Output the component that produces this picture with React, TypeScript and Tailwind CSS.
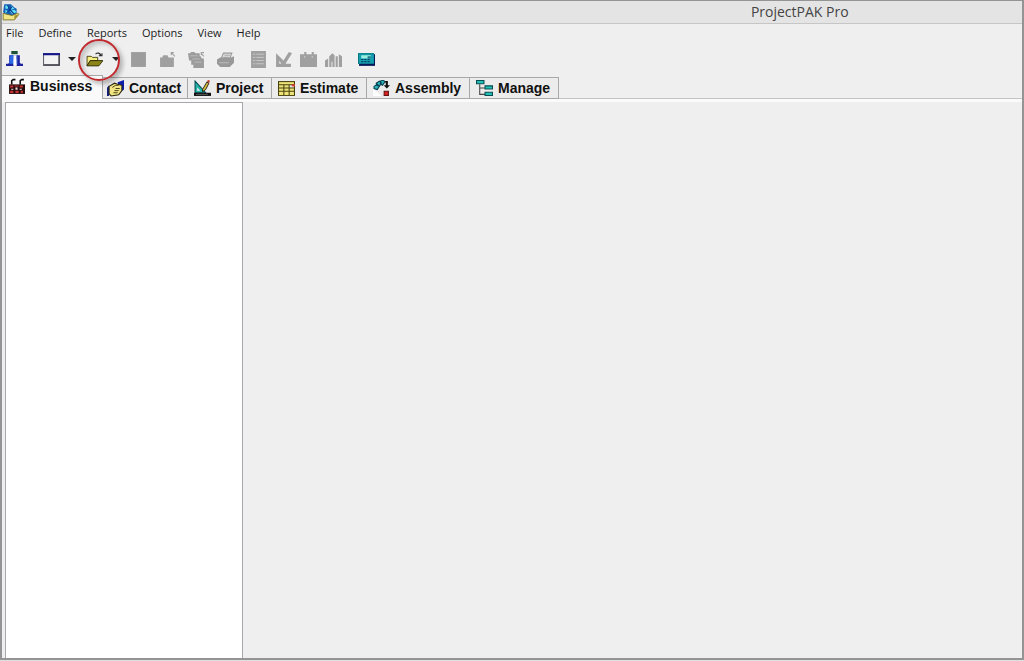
import type { ReactNode } from 'react'
import clsx from 'clsx'

type IconProps = { children: ReactNode; className?: string }

function Icon({ children, className }: IconProps) {
  return (
    <svg viewBox="0 0 16 16" className={clsx('block shrink-0', className ?? 'h-[17px] w-[17px]')} aria-hidden="true">
      {children}
    </svg>
  )
}

const AppIcon = () => (
  <Icon className="h-[18px] w-[18px]">
    <path d="M2 1h6l3 3 2 1v4l-2 3H4L1 8z" fill="#1560b4" />
    <path d="M3 2l3 1-1 2H3zM8 2l3 3-3 1zM7 7l4-1 2 2-4 2zM3 6l2 1v2H3z" fill="#62e4f4" />
    <path d="M5 2l2 4 4 4M9 3L7 6 4 9" fill="none" stroke="#0d3c94" />
    <path d="M1 9l3 1 5 1 5-2 1 1-4 5H1z" fill="#f1e585" stroke="#77702a" strokeWidth=".8" />
    <path d="M11 11l4-1-4 5z" fill="#a0922e" />
  </Icon>
)

const ExitIcon = () => (
  <Icon>
    <path d="M5 0h6v3H5z" fill="#1c5238" />
    <path d="M3 4h10v7l1 1h2v2h-6V8H7v6H0v-2h2l1-1z" fill="#1c22a0" />
    <path d="M4 4h3v8H3z" fill="#2a6ce8" />
    <path d="M7 4h3v9H7z" fill="#fafaff" />
    <path d="M10 4h1v8h-1z" fill="#3058c8" />
  </Icon>
)

const WindowIcon = () => (
  <Icon>
    <path d="M.5 2.5h15v11H.5z" fill="#f3f3f3" stroke="#62626f" />
    <path d="M0 2h16v2H0z" fill="#15158a" />
    <path d="M15 4v9H1" fill="none" stroke="#38383f" />
  </Icon>
)

const OpenIcon = () => (
  <Icon>
    <path d="M1 5h4l1 1h5v3H4l-3 5z" fill="#f8ef82" stroke="#333000" strokeWidth=".8" />
    <path d="M4 9h12l-4 5H1z" fill="#8a8419" stroke="#2a2800" strokeWidth=".8" />
    <path d="M9 3c2-2 4-1 5 1M15 2v2.5h-3" fill="none" stroke="#222" />
  </Icon>
)

const SaveIcon = () => (
  <Icon>
    <path d="M1 1h14v14H1z" fill="#9d9d9d" />
  </Icon>
)

const CloseFolderIcon = () => (
  <Icon>
    <path d="M1 6h2l1-2h4l1 2h5v9H1z" fill="#a0a0a0" />
    <path d="M15 5l-3-3M11.5 4V1.5H14" fill="none" stroke="#a0a0a0" />
  </Icon>
)

const CloseAllIcon = () => (
  <Icon>
    <path d="M0 2h2l1-1h3l1 1h4v3h1l1 2h2v9H5v-3H3V9H1z" fill="#9c9c9c" />
    <path d="M2 4.5h7M4 7.5h7M6 10.5h7" stroke="#c4c4c4" strokeWidth=".7" />
    <path d="M15 5l-3-3M12.5 4V1.5H15" fill="none" stroke="#a0a0a0" />
  </Icon>
)

const PrintIcon = () => (
  <Icon>
    <path d="M4 7l2-5h8l-2 5z" fill="#ddd" stroke="#999" />
    <path d="M7 4h5M6 6h5" stroke="#aaa" />
    <path d="M0 8l3-2h10l3-1v6l-4 4H3l-3-3z" fill="#999" />
    <path d="M2 11h9" stroke="#bbb" />
  </Icon>
)

const ListIcon = () => (
  <Icon>
    <path d="M1 0h14v16H1z" fill="#a0a0a0" />
    <path d="M3 3h2M6 3h7M3 6h2M6 6h7M3 9h2M6 9h7M3 12h2M6 12h7" stroke="#cfcfcf" strokeWidth=".8" />
  </Icon>
)

const DesignIcon = () => (
  <Icon>
    <path d="M1 2l7 7 5-8 3 1-5 8-1 2h5v3H1z" fill="#a0a0a0" />
    <path d="M4 9l2 3H4z" fill="#e4e4e4" />
  </Icon>
)

const KitIcon = () => (
  <Icon>
    <path d="M0 3h4V1h2v2h5V1h2v2h3v12H0z" fill="#a0a0a0" />
    <path d="M4 5.5h1M11 5.5h1" stroke="#ddd" />
  </Icon>
)

const ChartIcon = () => (
  <Icon>
    <path d="M0 9l3-2v8H0zM4 5l3-3 2 2v11H4z" fill="#a0a0a0" />
    <path d="M10 5h2v10h-2zM13 3l3 2v10h-3z" fill="#a0a0a0" />
    <path d="M6 10h1v5H6z" fill="#e6e6e6" />
  </Icon>
)

const CalcIcon = () => (
  <Icon>
    <path d="M1 3h15v11H1z" fill="#071a58" />
    <path d="M0 2h15v10H0z" fill="#149fae" />
    <path d="M3 4h9v3H3z" fill="#9aeee0" />
    <path d="M9 5h3v2H9z" fill="#176f82" />
    <path d="M3 8h2M6 8h2M9 8h2M3 10h2M6 10h2M9 10h2" stroke="#063f65" />
    <path d="M0 2.5h15M.5 2v10" stroke="#067a80" />
  </Icon>
)

const FactoryIcon = () => (
  <Icon>
    <path d="M3.5 6V2.5L5 1.5h2M11.5 6V2.5l1.5-1h2" fill="none" stroke="#111" strokeWidth="1.5" />
    <path d="M1 6h15v9H1z" fill="#260b0b" />
    <path d="M2 7h3v2H2zM6 7h4v1H6zM11 7h3v2h-3zM2 12h3v2H2zM7 12h3v2H7zM12 12h2v2h-2z" fill="#c83232" />
    <path d="M3 10h2v1H3zM7 9h2v2H7zM11 10h2v1h-2z" fill="#f0dede" />
  </Icon>
)

const ContactIcon = () => (
  <Icon>
    <path d="M10 2l6-2v9l-4 3z" fill="#0c1ea8" />
    <path d="M0 7l2-2v10H0z" fill="#151c80" />
    <path d="M2 6l5-3 3 1 4 1v5l-3 4-7 1-2-2z" fill="#f2e583" stroke="#29260f" />
    <path d="M5 7l3-2h3M8 8h4M7 10h4M6 12h4" fill="none" stroke="#443f18" strokeWidth=".9" />
  </Icon>
)

const ProjectIcon = () => (
  <Icon>
    <path d="M1 1l10 11H1z" fill="#23b5a8" stroke="#064b50" />
    <path d="M3 7l3 3H3z" fill="#eee" />
    <path d="M8 9l4-7 2 1-3 6-3 2z" fill="#d5bb37" stroke="#111" strokeWidth=".8" />
    <path d="M12 1l2-1 1 1-1 2z" fill="#b93325" />
    <path d="M0 12h16v3H0z" fill="#111" />
    <path d="M2 13.5h11" stroke="#777" strokeWidth=".7" />
  </Icon>
)

const EstimateIcon = () => (
  <Icon>
    <path d="M0 1h16v14H0z" fill="#47420c" />
    <path d="M1 2h14v2H1z" fill="#eee478" />
    <path d="M1 5h4v2H1zM6 5h4v2H6zM1 8h4v2H1zM6 8h4v2H6zM1 11h4v3H1zM6 11h4v3H6zM11 8h4v2h-4zM11 11h4v3h-4z" fill="#eee37a" />
    <path d="M11 5h4v2h-4z" fill="#f4f4f4" />
    <path d="M13 4h3v2h-3z" fill="#d33a2c" />
  </Icon>
)

const AssemblyIcon = () => (
  <Icon>
    <path d="M0 8l8 7H0z" fill="#fff" />
    <path d="M1 6l3-2 2 2-2 3-3-1zM3 3l3-2 2 2-2 3-2-1zM7 1l3-1 1 2-2 3-2-1z" fill="#2ab7bd" stroke="#073e50" />
    <path d="M11 1h3v4h2l-3 3-3-3h2V3z" fill="#111" />
    <path d="M10.5 10.5h4v4h-4z" fill="#d32222" stroke="#681111" />
  </Icon>
)

const ManageIcon = () => (
  <Icon>
    <path d="M3.5 4v9.5H9M3.5 7.5H9" fill="none" stroke="#444" />
    <path d="M.5.5h7v3h-7zM8.5 5.5h7v3h-7zM8.5 11.5h7v3h-7z" fill="#20c0b7" stroke="#084c50" />
  </Icon>
)

const menus = ['File', 'Define', 'Reports', 'Options', 'View', 'Help']

const tabs = [
  { label: 'Business', icon: FactoryIcon, width: 'w-[101px]' },
  { label: 'Contact', icon: ContactIcon, width: 'w-[85px]' },
  { label: 'Project', icon: ProjectIcon, width: 'w-[84px]' },
  { label: 'Estimate', icon: EstimateIcon, width: 'w-[95px]' },
  { label: 'Assembly', icon: AssemblyIcon, width: 'w-[103px]' },
  { label: 'Manage', icon: ManageIcon, width: 'w-[89px]' },
]

function ToolButton({ label, children, disabled }: { label: string; children: ReactNode; disabled?: boolean }) {
  return (
    <button type="button" aria-label={label} disabled={disabled} className="flex h-8 items-center">
      {children}
    </button>
  )
}

const DropArrow = () => (
  <svg viewBox="0 0 8 4" className="block h-1 w-2" aria-hidden="true">
    <path d="M0 0h8L4 4z" fill="#222" />
  </svg>
)

export default function App() {
  return (
    <div className="flex min-h-screen flex-col border-b border-[#e0e0e0] bg-[#efefef] font-['Open_Sans',sans-serif] text-[#1c1c1c]">
      <div className="flex flex-1 flex-col border-2 border-t border-[#949494]">
        <header className="flex h-[23px] items-center border-b border-[#c6c6c6] bg-[#e4e4e4]">
          <AppIcon />
          <h1 className="ml-auto mr-[17%] text-sm leading-5 text-[#444]">ProjectPAK Pro</h1>
        </header>

        <nav className="flex h-[18px] items-center gap-[15px] pl-1 text-[11px] font-medium">
          {menus.map((menu) => (
            <button key={menu} type="button">{menu}</button>
          ))}
        </nav>

        <div className="flex h-[33px] items-end pl-1">
          <ToolButton label="Exit"><ExitIcon /></ToolButton>
          <div className="ml-5 flex items-center gap-2">
            <ToolButton label="New"><WindowIcon /></ToolButton>
            <ToolButton label="New options"><DropArrow /></ToolButton>
          </div>
          <div className="relative ml-2.5 flex items-center gap-[9px]">
            <ToolButton label="Open"><OpenIcon /></ToolButton>
            <ToolButton label="Open options"><DropArrow /></ToolButton>
            <div className="pointer-events-none absolute -left-2 -top-1 z-10 size-[42px] rounded-full border-2 border-[#c02a2f] shadow-[3px_3px_4px_rgba(0,0,0,0.25),inset_3px_3px_4px_rgba(0,0,0,0.18)]" />
          </div>
          <div className="ml-2.5 flex items-center gap-3">
            <ToolButton label="Save" disabled><SaveIcon /></ToolButton>
            <ToolButton label="Close" disabled><CloseFolderIcon /></ToolButton>
            <ToolButton label="Close all" disabled><CloseAllIcon /></ToolButton>
            <ToolButton label="Print" disabled><PrintIcon /></ToolButton>
          </div>
          <div className="ml-4 flex items-center gap-2">
            <ToolButton label="List" disabled><ListIcon /></ToolButton>
            <ToolButton label="Design" disabled><DesignIcon /></ToolButton>
            <ToolButton label="Kit" disabled><KitIcon /></ToolButton>
            <ToolButton label="Chart" disabled><ChartIcon /></ToolButton>
          </div>
          <div className="ml-4">
            <ToolButton label="Calculator"><CalcIcon /></ToolButton>
          </div>
        </div>

        <div role="tablist" className="flex h-6 items-end font-['Liberation_Sans',sans-serif] text-sm font-bold text-[#111]">
          {tabs.map(({ label, icon: TabIcon, width }, i) => (
            <button
              key={label}
              type="button"
              role="tab"
              aria-selected={i === 0}
              className={clsx(
                'flex gap-[5px] border-r border-[#a8a8a8]',
                width,
                i === 0
                  ? 'h-6 items-start border-t bg-[#fafafa] pl-1.5 pt-0.5'
                  : 'h-[22px] items-center border-y bg-[#ececec]',
                i === 1 && 'pl-1',
                i > 1 && 'pl-1.5',
              )}
            >
              <TabIcon />
              <span className="leading-4">{label}</span>
            </button>
          ))}
          <div className="flex-1 self-stretch border-b border-[#c4c4c4]" />
        </div>

        <main className="flex flex-1 border-t-[3px] border-[#fafafa] pl-[3px]">
          <aside className="w-[238px] border border-b-0 border-[#a5a9ae] bg-white" />
          <section className="flex-1" />
        </main>
      </div>
    </div>
  )
}
